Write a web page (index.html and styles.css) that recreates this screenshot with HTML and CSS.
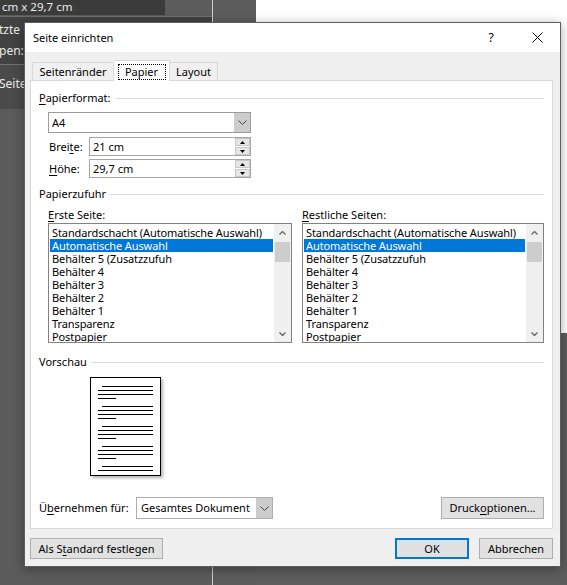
FILE: index.html
```html
<!DOCTYPE html>
<html lang="de">
<head>
<meta charset="utf-8">
<title>Seite einrichten</title>
<link rel="stylesheet" href="styles.css">
</head>
<body>
<div class="desktop">
  <div class="app-left">
    <div class="app-main">
      <div class="row r1"><span class="r1-dark">cm x 29,7 cm</span></div>
      <div class="row r2"><span>tzte l</span><span>pen: .</span></div>
      <div class="row r3"><span>Seite</span></div>
      <div class="row r4"></div>
    </div>
    <div class="app-side"></div>
  </div>
  <div class="app-right">
    <div class="paper"></div>
    <div class="shade"></div>
  </div>

  <div class="dialog">
    <div class="titlebar">
      <span class="title">Seite einrichten</span>
      <span class="tb-btn tb-help">?</span>
      <span class="tb-btn"><svg width="11" height="11" viewBox="0 0 11 11"><path d="M0.5 0.5 L10.5 10.5 M10.5 0.5 L0.5 10.5" stroke="#000" stroke-width="1" fill="none"/></svg></span>
    </div>
    <div class="dlg-body">
      <div class="tabs">
        <div class="tab t1">Seitenränder</div>
        <div class="tab active"><span class="focus">Papier</span></div>
        <div class="tab t3">Layout</div>
      </div>
      <div class="panel">
        <div class="ghead h1"><span><u>P</u>apierformat:</span></div>
        <div class="gbody">
          <div class="combo c-format">
            <span class="combo-val">A4</span>
            <span class="combo-btn"><svg width="9" height="5" viewBox="0 0 9 5"><polyline points="0.5,0.5 4.5,4.5 8.5,0.5" stroke="#444" stroke-width="1" fill="none"/></svg></span>
          </div>
          <div class="frow fr1">
            <span class="flabel">Brei<u>t</u>e:</span>
            <div class="spin">
              <span class="spin-val">21 cm</span>
              <span class="spin-btns">
                <span class="sbtn"><svg width="5" height="3" viewBox="0 0 5 3"><polygon points="0,3 2.5,0 5,3" fill="#000"/></svg></span>
                <span class="sbtn"><svg width="5" height="3" viewBox="0 0 5 3"><polygon points="0,0 5,0 2.5,3" fill="#000"/></svg></span>
              </span>
            </div>
          </div>
          <div class="frow fr2">
            <span class="flabel"><u>H</u>öhe:</span>
            <div class="spin">
              <span class="spin-val">29,7 cm</span>
              <span class="spin-btns">
                <span class="sbtn"><svg width="5" height="3" viewBox="0 0 5 3"><polygon points="0,3 2.5,0 5,3" fill="#000"/></svg></span>
                <span class="sbtn"><svg width="5" height="3" viewBox="0 0 5 3"><polygon points="0,0 5,0 2.5,3" fill="#000"/></svg></span>
              </span>
            </div>
          </div>
        </div>

        <div class="ghead h2"><span>Papierzufuhr</span></div>
        <div class="gbody lists">
          <div class="lcol">
            <div class="llabel"><u>E</u>rste Seite:</div>
            <div class="listbox">
              <div class="items">
                <div class="item">Standardschacht (Automatische Auswahl)</div>
                <div class="item sel">Automatische Auswahl</div>
                <div class="item">Behälter 5 (Zusatzzufuh</div>
                <div class="item">Behälter 4</div>
                <div class="item">Behälter 3</div>
                <div class="item">Behälter 2</div>
                <div class="item">Behälter 1</div>
                <div class="item">Transparenz</div>
                <div class="item">Postpapier</div>
              </div>
              <div class="vscroll">
                <span class="arr"><svg width="7" height="4" viewBox="0 0 7 4"><polyline points="0.5,3.5 3.5,0.5 6.5,3.5" stroke="#606060" stroke-width="1.2" fill="none"/></svg></span>
                <span class="thumb"></span>
                <span class="track"></span>
                <span class="arr"><svg width="7" height="4" viewBox="0 0 7 4"><polyline points="0.5,0.5 3.5,3.5 6.5,0.5" stroke="#606060" stroke-width="1.2" fill="none"/></svg></span>
              </div>
            </div>
          </div>
          <div class="lcol">
            <div class="llabel"><u>R</u>estliche Seiten:</div>
            <div class="listbox">
              <div class="items">
                <div class="item">Standardschacht (Automatische Auswahl)</div>
                <div class="item sel">Automatische Auswahl</div>
                <div class="item">Behälter 5 (Zusatzzufuh</div>
                <div class="item">Behälter 4</div>
                <div class="item">Behälter 3</div>
                <div class="item">Behälter 2</div>
                <div class="item">Behälter 1</div>
                <div class="item">Transparenz</div>
                <div class="item">Postpapier</div>
              </div>
              <div class="vscroll">
                <span class="arr"><svg width="7" height="4" viewBox="0 0 7 4"><polyline points="0.5,3.5 3.5,0.5 6.5,3.5" stroke="#606060" stroke-width="1.2" fill="none"/></svg></span>
                <span class="thumb"></span>
                <span class="track"></span>
                <span class="arr"><svg width="7" height="4" viewBox="0 0 7 4"><polyline points="0.5,0.5 3.5,3.5 6.5,0.5" stroke="#606060" stroke-width="1.2" fill="none"/></svg></span>
              </div>
            </div>
          </div>
        </div>

        <div class="ghead h3"><span>Vorschau</span></div>
        <div class="gbody">
          <div class="page">
            <div class="pgroup"><i class="pl ind"></i><i class="pl"></i><i class="pl"></i><i class="pl short"></i></div>
            <div class="pgroup"><i class="pl ind"></i><i class="pl"></i><i class="pl"></i><i class="pl short"></i></div>
            <div class="pgroup"><i class="pl ind"></i><i class="pl"></i><i class="pl"></i><i class="pl short"></i></div>
            <div class="pgroup"><i class="pl ind"></i><i class="pl"></i><i class="pl"></i><i class="pl short"></i></div>
            <div class="pgroup"><i class="pl ind"></i><i class="pl"></i></div>
          </div>
        </div>

        <div class="apply-row">
          <span class="alabel">Ü<u>b</u>ernehmen für:</span>
          <div class="combo c-apply">
            <span class="combo-val">Gesamtes Dokument</span>
            <span class="combo-btn"><svg width="9" height="5" viewBox="0 0 9 5"><polyline points="0.5,0.5 4.5,4.5 8.5,0.5" stroke="#444" stroke-width="1" fill="none"/></svg></span>
          </div>
          <span class="btn b-print">Druck<u>o</u>ptionen...</span>
        </div>
      </div>

      <div class="btn-row">
        <span class="btn b-std">Als S<u>t</u>andard festlegen</span>
        <span class="btn b-ok">OK</span>
        <span class="btn b-cancel">Abbrechen</span>
      </div>
    </div>
  </div>
</div>
</body>
</html>
```

FILE: styles.css
```css
* { box-sizing: border-box; }
html, body { margin: 0; padding: 0; }
body {
  width: 567px;
  height: 585px;
  overflow: hidden;
  font-family: "Noto Sans", "DejaVu Sans", sans-serif;
  font-size: 11px;
  color: #000;
}
u { text-decoration: underline; text-underline-offset: 2px; text-decoration-thickness: 1px; }

/* background application */
.desktop {
  position: relative;
  display: flex;
  width: 567px;
  height: 585px;
  background: #5b5b5b;
}
.app-left { display: flex; width: 256px; flex: none; }
.app-main { width: 212px; display: flex; flex-direction: column; background: #5b5b5b; }
.app-side { width: 44px; border-left: 1px solid #cfcfcf; background: #5c5c5c; }
.row { color: #eaeaea; font-size: 12px; white-space: nowrap; overflow: hidden; }
.r1 { height: 17px; display: flex; background: #5c5c5c; border-bottom: 1px solid #6e6e6e; font-size: 11.5px; }
.r1-dark { width: 165px; height: 15px; background: #3b3b3b; line-height: 14px; padding-left: 2px; }
.r2 {
  height: 48px;
  background: #424242;
  border-bottom: 1px solid #727272;
  display: flex;
  flex-direction: column;
  padding-top: 5px;
  gap: 5px;
  line-height: 16px;
}
.r2 span { margin-left: -1px; }
.r3 { height: 44px; background: #4a4a4a; padding-top: 11px; line-height: 16px; }
.r3 span { margin-left: -1px; }
.r4 { flex: 1; background: #5b5b5b; }
.app-right { flex: 1; display: flex; flex-direction: column; }
.paper { height: 333px; background: #fff; }
.shade { flex: 1; background: #5d5d5d; }

/* dialog window */
.dialog {
  position: absolute;
  left: 24px;
  top: 22px;
  width: 537px;
  height: 545px;
  border: 1px solid #5e5e5e;
  background: #f0f0f0;
  box-shadow: 0 2px 10px rgba(0, 0, 0, 0.35);
  display: flex;
  flex-direction: column;
}
.titlebar {
  height: 29px;
  flex: none;
  background: #fff;
  display: flex;
  align-items: center;
  padding-left: 8px;
}
.title { flex: 1; font-size: 11px; line-height: 16px; }
.tb-btn { width: 46px; height: 29px; display: flex; align-items: center; justify-content: center; }
.tb-help { font-size: 12px; }

.dlg-body {
  flex: 1;
  display: flex;
  flex-direction: column;
  padding: 8px 7px 7px 5px;
}

/* tabs */
.tabs {
  display: flex;
  align-items: flex-end;
  height: 20px;
  padding-left: 2px;
  position: relative;
  z-index: 1;
  flex: none;
}
.tab {
  height: 18px;
  border: 1px solid #d9d9d9;
  border-bottom: none;
  background: #f0f0f0;
  display: flex;
  align-items: center;
  justify-content: center;
  line-height: 16px;
}
.t1 { width: 82px; }
.t3 { width: 48px; border-left: none; }
.tab.active {
  width: 56px;
  height: 21px;
  margin-bottom: -1px;
  background: #fff;
  border-left: none;
  align-items: flex-start;
  padding-top: 3px;
}
.focus {
  width: 48px;
  height: 16px;
  border: 1px dotted #000;
  display: flex;
  align-items: center;
  justify-content: center;
  line-height: 14px;
}

/* panel */
.panel {
  height: 449px;
  flex: none;
  background: #fff;
  border: 1px solid #d9d9d9;
  padding: 0 8px;
  display: flex;
  flex-direction: column;
}
.ghead { display: flex; align-items: center; height: 16px; line-height: 16px; white-space: nowrap; }
.ghead::after { content: ""; flex: 1; height: 1px; background: #dcdcdc; margin-left: 4px; }
.h1 { margin-top: 9px; }
.h2 { margin-top: 8px; }
.h3 { margin-top: 11px; }
.gbody { margin-left: 9px; }

.combo {
  display: flex;
  align-items: stretch;
  border: 1px solid #9c9c9c;
  background: #fff;
}
.combo-val { flex: 1; padding-left: 3px; display: flex; align-items: center; line-height: 16px; }
.combo-btn { width: 16px; background: #cccccc; display: flex; align-items: center; justify-content: center; }
.c-format { width: 203px; height: 21px; margin-top: 6px; }

.frow { display: flex; align-items: center; height: 19px; }
.fr1 { margin-top: 4px; }
.fr2 { margin-top: 3px; }
.flabel { width: 41px; padding-left: 1px; line-height: 16px; }
.spin {
  width: 162px;
  height: 19px;
  display: flex;
  border: 1px solid #a6a6a6;
  background: #fff;
}
.spin-val { flex: 1; padding-left: 3px; display: flex; align-items: center; line-height: 16px; }
.spin-btns { width: 16px; display: flex; flex-direction: column; gap: 1px; padding: 0 0 0 1px; }
.sbtn {
  flex: 1;
  background: #e6e6e6;
  border: 1px solid #c8c8c8;
  display: flex;
  align-items: center;
  justify-content: center;
}

/* list boxes */
.lists { display: grid; grid-template-columns: 244px 242px; column-gap: 10px; margin-top: 5px; }
.llabel { height: 16px; line-height: 16px; }
.listbox {
  height: 120px;
  display: flex;
  border: 1px solid #828282;
  background: #fff;
}
.items { flex: 1; min-width: 0; padding: 2px 1px 0 1px; overflow: hidden; }
.item { height: 13px; line-height: 13px; padding-left: 2px; white-space: nowrap; letter-spacing: -0.1px; }
.item.sel { background: #0078d7; color: #fff; }
.vscroll { width: 17px; background: #f0f0f0; display: flex; flex-direction: column; }
.arr { height: 17px; display: flex; align-items: center; justify-content: center; flex: none; }
.thumb { height: 20px; margin: 1px 1px 0 1px; background: #cdcdcd; flex: none; }
.track { flex: 1; }

/* preview */
.page {
  width: 71px;
  height: 99px;
  margin: 7px 0 0 42px;
  border: 1px solid #000;
  background: #fff;
  box-shadow: 2px 2px 3px rgba(0, 0, 0, 0.3);
  padding: 8px 7px 0 7px;
  display: flex;
  flex-direction: column;
  gap: 7px;
}
.pgroup { display: flex; flex-direction: column; gap: 3px; }
.pl { display: block; height: 1px; background: #000; margin-left: 0; width: 55px; }
.pl.ind { margin-left: 4px; width: 51px; }
.pl.short { width: 18px; }

/* apply row */
.apply-row { display: flex; align-items: center; height: 22px; margin-top: 21px; }
.alabel { width: 97px; line-height: 16px; }
.c-apply { width: 137px; height: 22px; border-color: #adadad; }
.c-apply .combo-val { padding-left: 4px; }

.btn {
  display: flex;
  align-items: center;
  justify-content: center;
  background: #e1e1e1;
  border: 1px solid #adadad;
  line-height: 16px;
  white-space: nowrap;
}
.b-print { width: 103px; height: 22px; margin-left: auto; }

/* bottom buttons */
.btn-row { display: flex; height: 21px; margin-top: 9px; flex: none; }
.b-std { width: 133px; }
.b-ok { width: 74px; margin-left: auto; border-color: #0078d7; box-shadow: inset 0 0 0 1px #0078d7; }
.b-cancel { width: 74px; margin-left: 10px; }
```
